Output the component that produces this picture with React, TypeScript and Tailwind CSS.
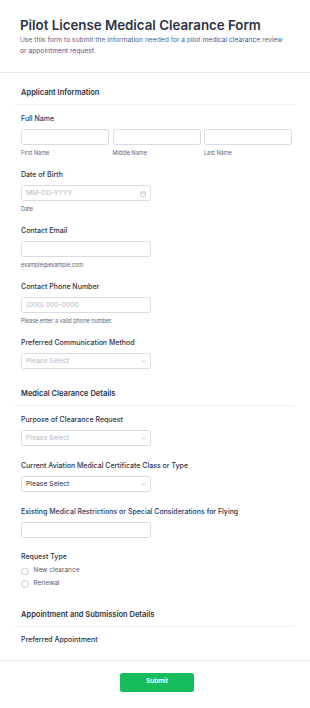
import { ChevronDown } from "lucide-react";

const font = { fontFamily: "Inter, 'Noto Sans', sans-serif" };

function Label({ children, className = "" }: { children: React.ReactNode; className?: string }) {
  return (
    <div className={`text-[7px] leading-[10px] font-medium text-[#2c3345] ${className}`}>{children}</div>
  );
}

function Sub({ children }: { children: React.ReactNode }) {
  return <div className="mt-[4px] text-[5.5px] leading-[8px] text-[#57647e]">{children}</div>;
}

function TextBox({ placeholder, icon }: { placeholder?: string; icon?: boolean }) {
  return (
    <div className="relative flex h-[16px] w-[130px] items-center rounded-[2.5px] border border-[#d9dbe2] bg-white px-[4px]">
      <span className="text-[6.8px] text-[#b4b9c6]">{placeholder}</span>
      {icon && (
        <svg className="absolute right-[4px] top-[5px]" width="6" height="6" viewBox="0 0 6 6" fill="none">
          <rect x="0.5" y="1" width="5" height="4.5" rx="0.7" stroke="#b4b9c6" strokeWidth="0.7" />
          <line x1="0.5" y1="2.4" x2="5.5" y2="2.4" stroke="#b4b9c6" strokeWidth="0.6" />
          <line x1="1.8" y1="0.2" x2="1.8" y2="1.3" stroke="#b4b9c6" strokeWidth="0.6" />
          <line x1="4.2" y1="0.2" x2="4.2" y2="1.3" stroke="#b4b9c6" strokeWidth="0.6" />
        </svg>
      )}
    </div>
  );
}

function Select({ dark }: { dark?: boolean }) {
  return (
    <div className="relative flex h-[16px] w-[130px] items-center rounded-[2.5px] border border-[#d9dbe2] bg-white px-[4px]">
      <span className={`text-[6.8px] ${dark ? "text-[#2c3345]" : "text-[#b4b9c6]"}`}>Please Select</span>
      <ChevronDown className="absolute right-[4px] top-[5px] h-[5px] w-[5px] text-[#8b93a6]" strokeWidth={3} />
    </div>
  );
}

function SectionHead({ title, className = "" }: { title: string; className?: string }) {
  return (
    <div className={`mx-[15px] border-b border-[#eef0f4] pb-[6px] ${className}`}>
      <div className="pl-[6px] text-[7.5px] leading-[10px] font-semibold text-[#2c3345]">{title}</div>
    </div>
  );
}

function Radio({ text }: { text: string }) {
  return (
    <div className="flex h-[12.5px] items-center gap-[5px]">
      <span className="h-[7.5px] w-[7.5px] rounded-full border border-[#c6ccd8] bg-white" />
      <span className="text-[6.5px] text-[#4f5a70]">{text}</span>
    </div>
  );
}

export default function App() {
  return (
    <div className="min-h-screen bg-white" style={font}>
      {/* Header */}
      <div className="border-b border-[#e6e8ed] pl-[20px] pr-[10px] pt-[16px] pb-[16px]">
        <h1 className="text-[13.3px] leading-[18px] font-semibold text-[#2c3345]">
          Pilot License Medical Clearance Form
        </h1>
        <p className="mt-[1px] text-[6.7px] leading-[10.5px] text-[#57647e]">
          Use this form to submit the information needed for a pilot{" "}
          <span className="text-[#3a5aa6]">medical clearance</span> review
          <br />
          or <span className="text-[#3a5aa6]">appointment request</span>.
        </p>
      </div>

      {/* Applicant Information */}
      <SectionHead title="Applicant Information" className="mt-[15px]" />
      <div className="pl-[21px] pr-[18px]">
        <Label className="mt-[9px] text-[#283c6b]">Full Name</Label>
        <div className="mt-[5px] grid grid-cols-3 gap-[3.5px]">
          {["First Name", "Middle Name", "Last Name"].map((s) => (
            <div key={s}>
              <div className="h-[16px] rounded-[2.5px] border border-[#d9dbe2]" />
              <Sub>{s}</Sub>
            </div>
          ))}
        </div>

        <Label className="mt-[13px]">Date of Birth</Label>
        <div className="mt-[5px]">
          <TextBox placeholder="MM-DD-YYYY" icon />
        </div>
        <Sub>Date</Sub>

        <Label className="mt-[13px]">Contact Email</Label>
        <div className="mt-[5px]">
          <TextBox />
        </div>
        <Sub>example@example.com</Sub>

        <Label className="mt-[13px]">Contact Phone Number</Label>
        <div className="mt-[5px]">
          <TextBox placeholder="(000) 000-0000" />
        </div>
        <Sub>Please enter a valid phone number.</Sub>

        <Label className="mt-[13px]">Preferred Communication Method</Label>
        <div className="mt-[5px]">
          <Select />
        </div>
      </div>

      {/* Medical Clearance Details */}
      <SectionHead title="Medical Clearance Details" className="mt-[20px]" />
      <div className="pl-[21px] pr-[18px]">
        <Label className="mt-[9px]">Purpose of Clearance Request</Label>
        <div className="mt-[5px]">
          <Select />
        </div>

        <Label className="mt-[15px]">Current Aviation Medical Certificate Class or Type</Label>
        <div className="mt-[5px]">
          <Select dark />
        </div>

        <Label className="mt-[14.5px]">
          Existing <span className="text-[#283c6b]">Medical Restrictions</span> or{" "}
          <span className="text-[#283c6b]">Special Considerations</span> for Flying
        </Label>
        <div className="mt-[5px]">
          <TextBox />
        </div>

        <Label className="mt-[14px]">Request Type</Label>
        <div className="mt-[3.5px]">
          <Radio text="New clearance" />
          <Radio text="Renewal" />
        </div>
      </div>

      {/* Appointment and Submission Details */}
      <SectionHead title="Appointment and Submission Details" className="mt-[19.5px]" />
      <div className="border-b border-[#e6e8ed] pb-[15px] pl-[21px]">
        <Label className="mt-[8px]">Preferred Appointment</Label>
      </div>

      <div className="flex justify-center pt-[12px] pb-[17px] pl-[4px]">
        <button className="h-[19px] w-[74px] rounded-[2.5px] bg-[#18bd5b] text-[6.5px] font-semibold text-white">
          Submit
        </button>
      </div>
    </div>
  );
}
